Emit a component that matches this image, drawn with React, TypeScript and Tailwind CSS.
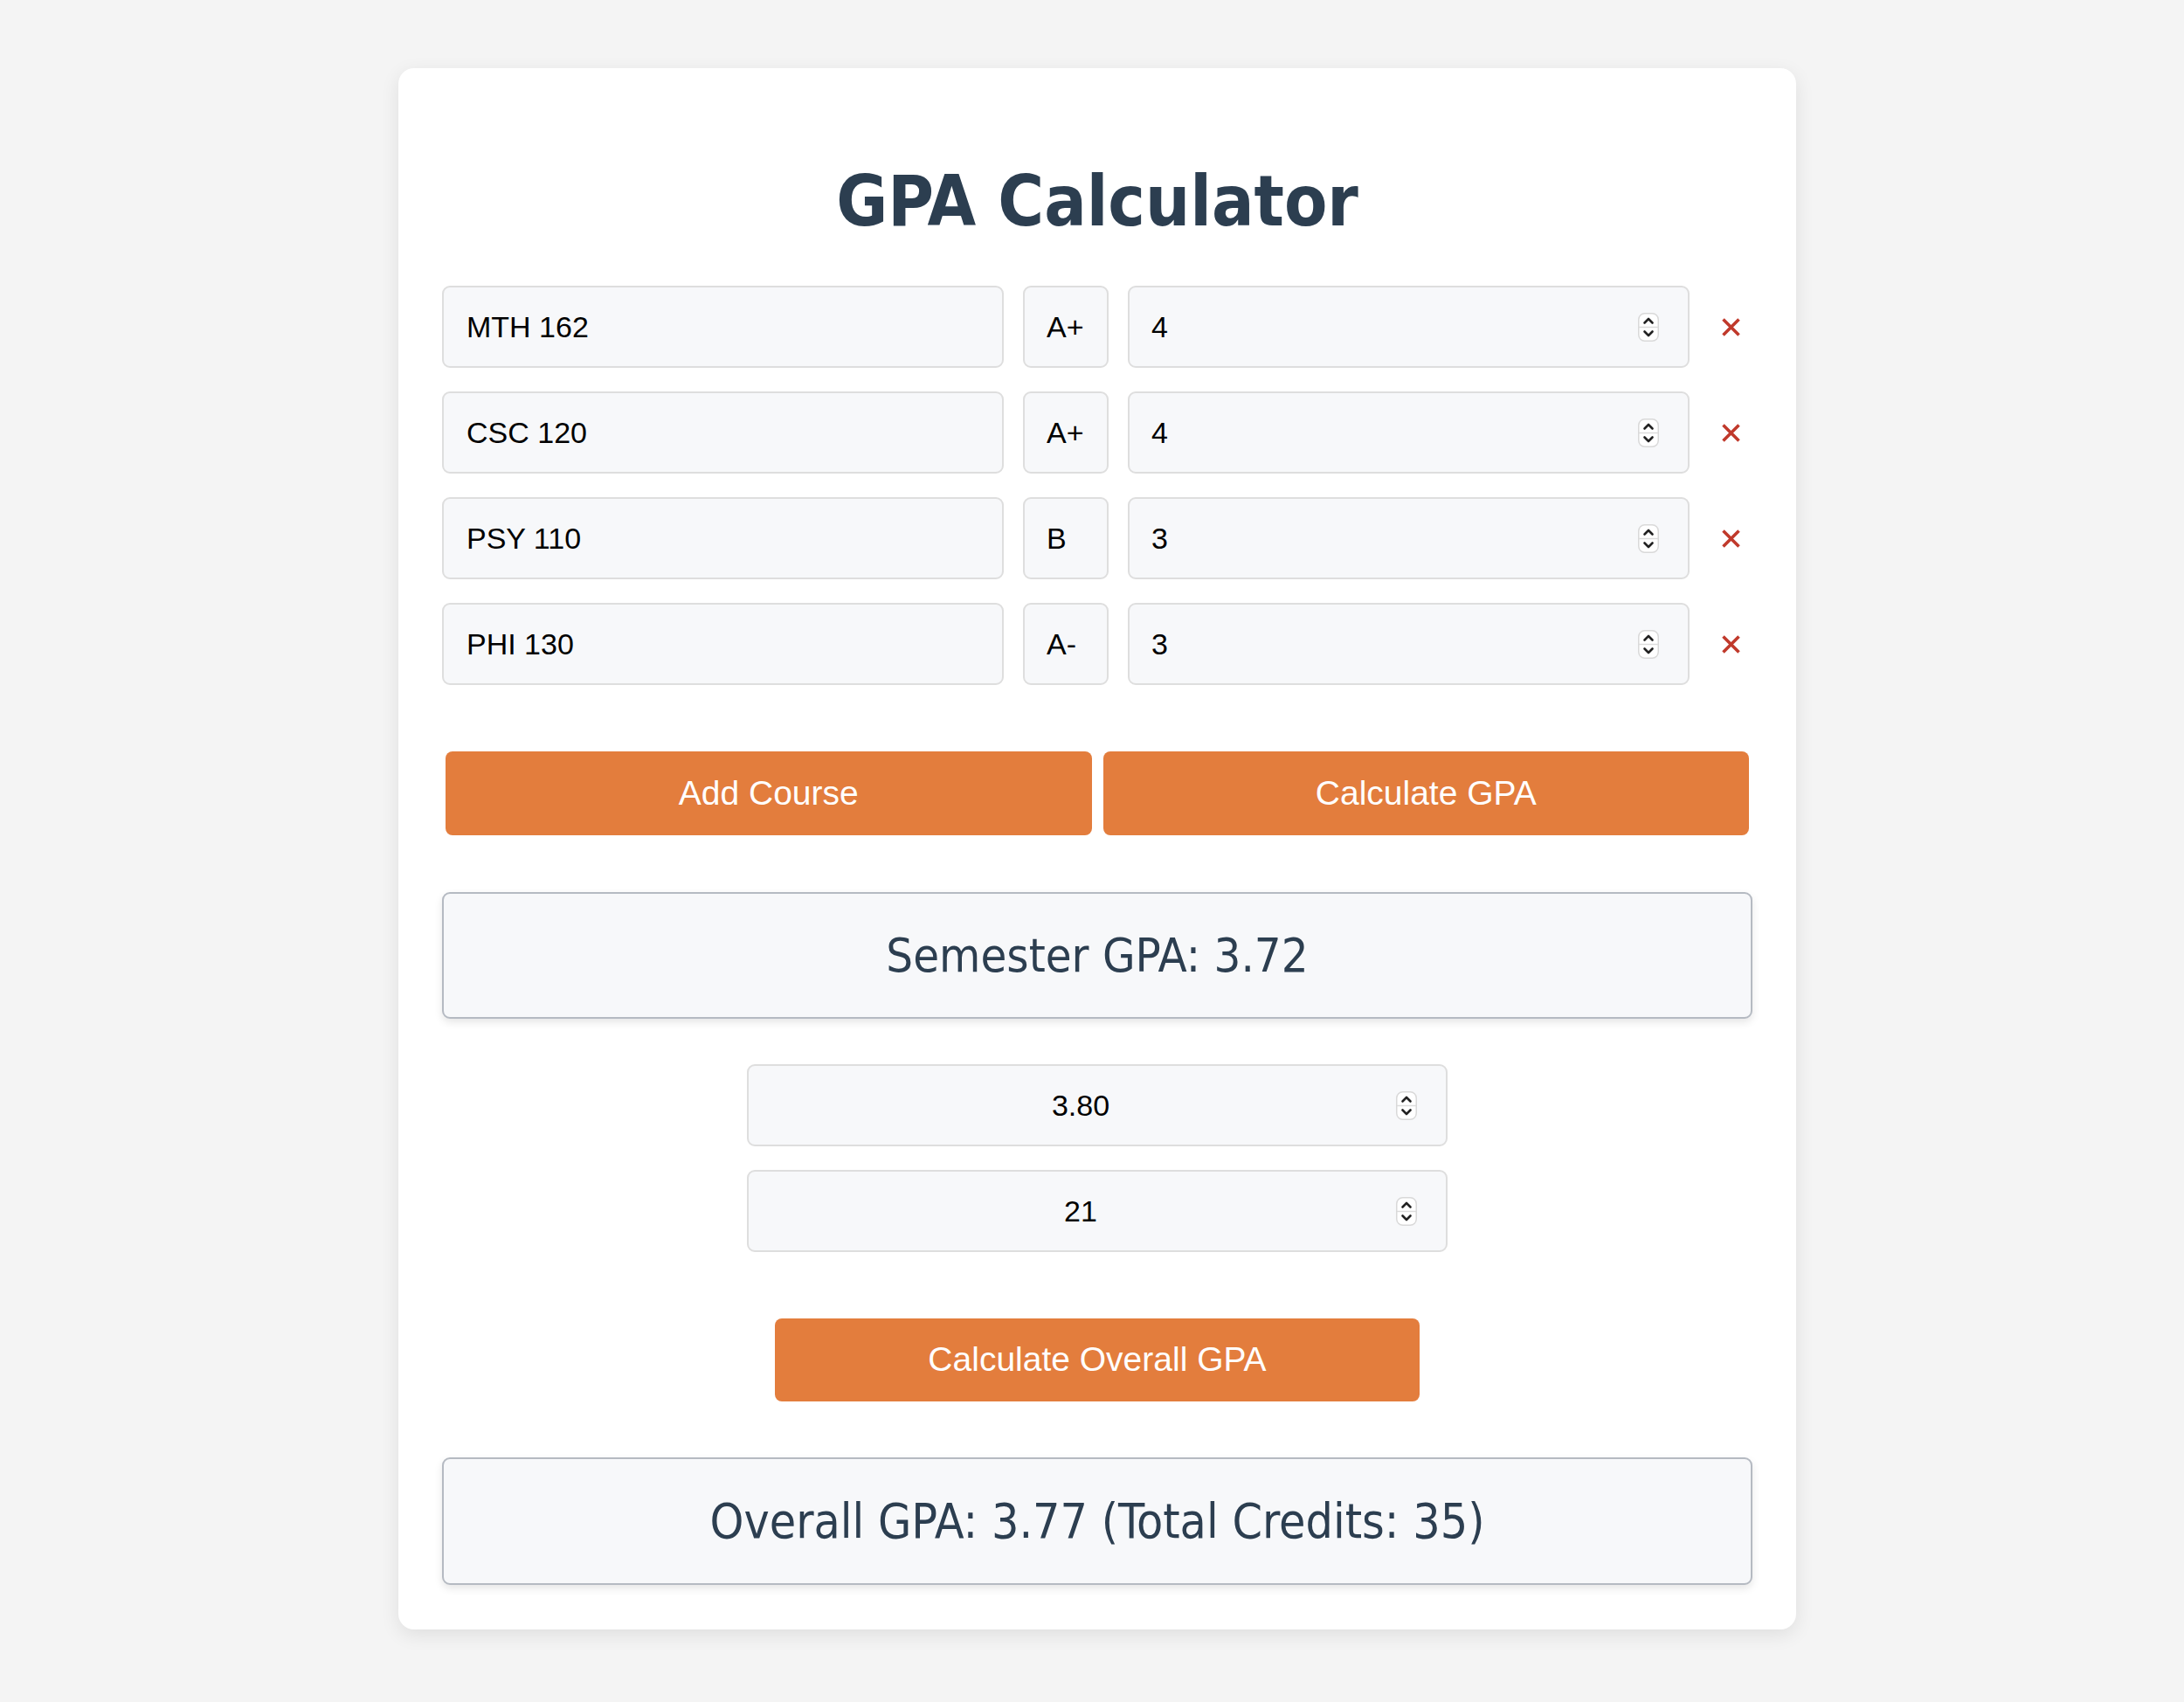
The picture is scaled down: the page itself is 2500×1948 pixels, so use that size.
import { FC } from 'react';

const courses = [
  { name: 'MTH 162', grade: 'A+', credits: '4' },
  { name: 'CSC 120', grade: 'A+', credits: '4' },
  { name: 'PSY 110', grade: 'B', credits: '3' },
  { name: 'PHI 130', grade: 'A-', credits: '3' },
];

const Spinner: FC = () => (
  <svg width="24" height="33" viewBox="0 0 24 33" className="shrink-0">
    <rect x="0.75" y="0.75" width="22.5" height="31.5" rx="7" fill="#ffffff" stroke="#d9d9d9" strokeWidth="1.5" />
    <line x1="1" y1="16.5" x2="23" y2="16.5" stroke="#dcdcdc" strokeWidth="1.5" />
    <path d="M7.5 11.5 L12 7 L16.5 11.5" fill="none" stroke="#222" strokeWidth="2.6" strokeLinecap="round" strokeLinejoin="round" />
    <path d="M7.5 21.5 L12 26 L16.5 21.5" fill="none" stroke="#222" strokeWidth="2.6" strokeLinecap="round" strokeLinejoin="round" />
  </svg>
);

const inputBox = 'h-[94px] shrink-0 rounded-[9px] border-2 border-[#dedede] bg-[#f7f8fa]';
const inputText = "bg-transparent outline-none text-[34px] text-black font-['Liberation_Sans',Arial,sans-serif]";
const tahoma = "font-['DejaVu_Sans_Condensed','DejaVu_Sans',sans-serif] font-stretch-condensed";

const App: FC = () => {
  return (
    <div className="min-h-screen bg-[#f4f4f4] pl-[12px] pt-[78px] pb-[80px] flex justify-center items-start">
      <div className="w-[1600px] bg-white rounded-[18px] shadow-[0_6px_22px_rgba(0,0,0,0.09)] px-[50px] pt-[113px] pb-[51px]">
        <h1 className={`${tahoma} text-center text-[80px] leading-none font-bold text-[#2c3e50]`}>
          GPA Calculator
        </h1>

        <div className="mt-[56px] flex flex-col gap-[27px]">
          {courses.map((c) => (
            <div key={c.name} className="flex h-[94px] items-center">
              <div className={`${inputBox} flex w-[643px] items-center pl-[26px]`}>
                <input readOnly value={c.name} className={`${inputText} w-full min-w-0`} />
              </div>
              <div className={`${inputBox} ml-[22px] flex w-[98px] items-center pl-[25px]`}>
                <input readOnly value={c.grade} className={`${inputText} w-full min-w-0`} />
              </div>
              <div className={`${inputBox} ml-[22px] flex w-[643px] items-center pl-[25px] pr-[33px]`}>
                <input readOnly value={c.credits} className={`${inputText} min-w-0 flex-1`} />
                <Spinner />
              </div>
              <button className="ml-[22px] flex h-[94px] w-[50px] shrink-0 items-center justify-center">
                <svg width="21" height="21" viewBox="0 0 21 21">
                  <path d="M1.5 1.5 L19.5 19.5 M19.5 1.5 L1.5 19.5" stroke="#c0392b" strokeWidth="3.6" strokeLinecap="butt" />
                </svg>
              </button>
            </div>
          ))}
        </div>

        <div className="mt-[76px] flex gap-[13px] px-[4px]">
          <button className="h-[96px] flex-1 rounded-[8px] bg-[#e37d3d] text-[39px] text-white font-['Liberation_Sans',Arial,sans-serif]">
            Add Course
          </button>
          <button className="h-[96px] flex-1 rounded-[8px] bg-[#e37d3d] text-[39px] text-white font-['Liberation_Sans',Arial,sans-serif]">
            Calculate GPA
          </button>
        </div>

        <div className={`${tahoma} mt-[65px] flex h-[145px] items-center justify-center rounded-[9px] border-2 border-[#b5bac2] bg-[#f7f8fa] text-[54px] text-[#2c3e50] shadow-[0_4px_10px_rgba(0,0,0,0.1)]`}>
          Semester GPA: 3.72
        </div>

        <div className="mx-auto mt-[52px] flex w-[802px] flex-col gap-[27px]">
          {['3.80', '21'].map((v) => (
            <div key={v} className={`${inputBox} flex items-center gap-[6px] pl-[25px] pr-[33px]`}>
              <input readOnly value={v} className={`${inputText} min-w-0 flex-1 text-center`} />
              <Spinner />
            </div>
          ))}
        </div>

        <button className="mx-auto mt-[76px] block h-[95px] w-[738px] rounded-[8px] bg-[#e37d3d] text-[39px] text-white font-['Liberation_Sans',Arial,sans-serif]">
          Calculate Overall GPA
        </button>

        <div className={`${tahoma} mt-[64px] flex h-[146px] items-center justify-center rounded-[9px] border-2 border-[#b5bac2] bg-[#f7f8fa] text-[55px] text-[#2c3e50] shadow-[0_4px_10px_rgba(0,0,0,0.1)]`}>
          Overall GPA: 3.77 (Total Credits: 35)
        </div>
      </div>
    </div>
  );
};

export default App;
